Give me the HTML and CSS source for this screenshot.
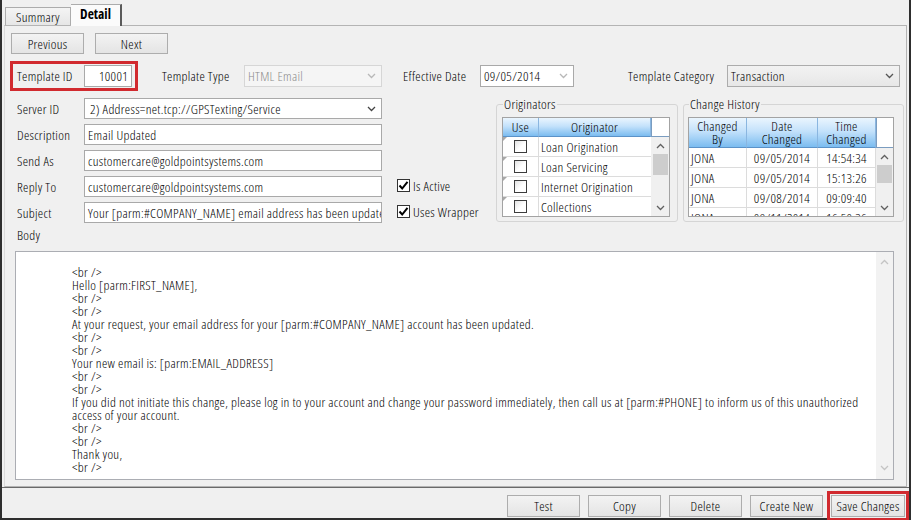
FILE: index.html
```html
<!DOCTYPE html>
<html>
<head>
<meta charset="utf-8">
<link rel="stylesheet" href="styles.css">
</head>
<body>
<div class="window">
  <div class="tabstrip">
    <div class="tab">Summary</div>
    <div class="tab active">Detail</div>
  </div>
  <div class="page">
    <div class="nav">
      <button class="btn">Previous</button>
      <button class="btn">Next</button>
    </div>
    <div class="row2">
      <div class="idbox">
        <span>Template ID</span>
        <div class="field idinput">10001</div>
      </div>
      <span class="lbl lbl-type">Template Type</span>
      <div class="field disabled w-type">HTML Email<svg class="chev" width="9" height="6" viewBox="0 0 9 6"><polyline points="1,1 4.5,4.5 8,1" fill="none" stroke="#b8b8b8" stroke-width="1.3"/></svg></div>
      <span class="lbl lbl-date">Effective Date</span>
      <div class="field w-date">09/05/2014<svg class="chev" width="9" height="6" viewBox="0 0 9 6"><polyline points="1,1 4.5,4.5 8,1" fill="none" stroke="#b8b8b8" stroke-width="1.3"/></svg></div>
      <span class="lbl lbl-cat">Template Category</span>
      <div class="field combo w-cat">Transaction<svg class="chev" width="9" height="6" viewBox="0 0 9 6"><polyline points="1,1 4.5,4.5 8,1" fill="none" stroke="#555" stroke-width="1.3"/></svg></div>
    </div>
    <div class="mid">
      <div class="form">
        <div class="frow"><span class="flbl">Server ID</span><div class="field wide srv">2) Address=net.tcp://GPSTexting/Service<svg class="chev" width="9" height="6" viewBox="0 0 9 6"><polyline points="1,1 4.5,4.5 8,1" fill="none" stroke="#444" stroke-width="1.3"/></svg></div></div>
        <div class="frow"><span class="flbl">Description</span><div class="field wide">Email Updated</div></div>
        <div class="frow"><span class="flbl">Send As</span><div class="field wide">customercare@goldpointsystems.com</div></div>
        <div class="frow"><span class="flbl">Reply To</span><div class="field wide">customercare@goldpointsystems.com</div></div>
        <div class="frow"><span class="flbl">Subject</span><div class="field wide">Your [parm:#COMPANY_NAME] email address has been updated</div></div>
      </div>
      <div class="checks">
        <div class="crow"></div>
        <div class="crow"></div>
        <div class="crow"></div>
        <div class="crow"><span class="cbox"><svg width="11" height="11" viewBox="0 0 11 11"><polyline points="1.5,5.5 4.2,8.5 9.5,1.8" fill="none" stroke="#000" stroke-width="2"/></svg></span><span>Is Active</span></div>
        <div class="crow"><span class="cbox"><svg width="11" height="11" viewBox="0 0 11 11"><polyline points="1.5,5.5 4.2,8.5 9.5,1.8" fill="none" stroke="#000" stroke-width="2"/></svg></span><span>Uses Wrapper</span></div>
      </div>
      <fieldset class="group g1">
        <legend>Originators</legend>
        <div class="grid og">
          <div class="ghead">
            <div class="hc h-use">Use</div>
            <div class="hc h-orig">Originator</div>
            <div class="corner"></div>
          </div>
          <div class="gbody">
            <div class="gcols">
              <div class="grow"><div class="c-use"><span class="gbox"></span></div><div class="c-orig">Loan Origination</div></div>
              <div class="grow"><div class="c-use"><span class="gbox"></span></div><div class="c-orig">Loan Servicing</div></div>
              <div class="grow"><div class="c-use"><span class="gbox"></span></div><div class="c-orig">Internet Origination</div></div>
              <div class="grow"><div class="c-use"><span class="gbox"></span></div><div class="c-orig">Collections</div></div>
            </div>
            <div class="vscroll s1">
              <div class="sarrow"><svg width="9" height="6" viewBox="0 0 9 6"><polyline points="1,5 4.5,1.5 8,5" fill="none" stroke="#606060" stroke-width="1.3"/></svg></div>
              <div class="thumb"></div>
              <div class="track"></div>
              <div class="sarrow"><svg width="9" height="6" viewBox="0 0 9 6"><polyline points="1,1 4.5,4.5 8,1" fill="none" stroke="#606060" stroke-width="1.3"/></svg></div>
            </div>
          </div>
        </div>
      </fieldset>
      <fieldset class="group g2">
        <legend>Change History</legend>
        <div class="grid hg">
          <div class="ghead tall">
            <div class="hc h-by">Changed<br>By</div>
            <div class="hc h-date">Date<br>Changed</div>
            <div class="hc h-time">Time<br>Changed</div>
            <div class="corner"></div>
          </div>
          <div class="gbody short">
            <div class="gcols hcols">
              <div class="grow"><div class="c-by">JONA</div><div class="c-date">09/05/2014</div><div class="c-time">14:54:34</div></div>
              <div class="grow"><div class="c-by">JONA</div><div class="c-date">09/05/2014</div><div class="c-time">15:13:26</div></div>
              <div class="grow"><div class="c-by">JONA</div><div class="c-date">09/08/2014</div><div class="c-time">09:09:40</div></div>
              <div class="grow"><div class="c-by">JONA</div><div class="c-date">09/11/2014</div><div class="c-time">16:50:36</div></div>
            </div>
            <div class="vscroll s2">
              <div class="sarrow"><svg width="9" height="6" viewBox="0 0 9 6"><polyline points="1,5 4.5,1.5 8,5" fill="none" stroke="#606060" stroke-width="1.3"/></svg></div>
              <div class="thumb"></div>
              <div class="track"></div>
              <div class="sarrow"><svg width="9" height="6" viewBox="0 0 9 6"><polyline points="1,1 4.5,4.5 8,1" fill="none" stroke="#606060" stroke-width="1.3"/></svg></div>
            </div>
          </div>
        </div>
      </fieldset>
    </div>
    <div class="bodylabel">Body</div>
    <div class="bodybox">
      <div class="bodytext">
        <div>&lt;br /&gt;</div>
        <div>Hello [parm:FIRST_NAME],</div>
        <div>&lt;br /&gt;</div>
        <div>&lt;br /&gt;</div>
        <div>At your request, your email address for your [parm:#COMPANY_NAME] account has been updated.</div>
        <div>&lt;br /&gt;</div>
        <div>&lt;br /&gt;</div>
        <div>Your new email is: [parm:EMAIL_ADDRESS]</div>
        <div>&lt;br /&gt;</div>
        <div>&lt;br /&gt;</div>
        <div>If you did not initiate this change, please log in to your account and change your password immediately, then call us at [parm:#PHONE] to inform us of this unauthorized</div>
        <div>access of your account.</div>
        <div>&lt;br /&gt;</div>
        <div>&lt;br /&gt;</div>
        <div>Thank you,</div>
        <div>&lt;br /&gt;</div>
      </div>
      <div class="bodyscroll">
        <svg width="9" height="6" viewBox="0 0 9 6"><polyline points="1,5 4.5,1.5 8,5" fill="none" stroke="#c4c4c4" stroke-width="1.3"/></svg>
        <svg width="9" height="6" viewBox="0 0 9 6"><polyline points="1,1 4.5,4.5 8,1" fill="none" stroke="#c4c4c4" stroke-width="1.3"/></svg>
      </div>
    </div>
  </div>
  <div class="footer">
    <button class="btn">Test</button>
    <button class="btn">Copy</button>
    <button class="btn">Delete</button>
    <button class="btn">Create New</button>
    <div class="savebox"><button class="btn save">Save Changes</button></div>
  </div>
</div>
</body>
</html>
```

FILE: styles.css
```css
* { box-sizing: border-box; }
html, body { margin: 0; padding: 0; }
body {
  width: 911px;
  height: 520px;
  overflow: hidden;
  background: #f0f0f0;
  font-family: "Open Sans", "Liberation Sans", Arial, sans-serif;
  font-stretch: 75%;
  font-weight: 300;
  font-size: 13.5px;
  letter-spacing: 0.3px;
  color: #000;
}
.window {
  width: 911px;
  height: 520px;
  border-left: 2px solid #2e2e2e;
  border-right: 2px solid #2e2e2e;
  border-bottom: 2px solid #2e2e2e;
  display: flex;
  flex-direction: column;
}

/* tabs */
.tabstrip {
  height: 25px;
  flex: none;
  display: flex;
  align-items: flex-end;
  padding-left: 3px;
  position: relative;
  z-index: 1;
}
.tab {
  height: 18px;
  width: 66px;
  border: 1px solid #acacac;
  border-bottom: none;
  background: linear-gradient(#f4f4f4, #e6e6e6);
  display: flex;
  align-items: center;
  justify-content: center;
}
.tab.active {
  height: 22px;
  width: 51px;
  margin-bottom: -1px;
  background: #fbfbfb;
  font-weight: bold;
  letter-spacing: 0;
  border-left: none;
  border-right: 2px solid #5a5a5a;
  padding-bottom: 3px;
}

.page {
  margin-left: 2px;
  width: 903px;
  height: 462px;
  flex: none;
  border: 1px solid #b4b4b4;
  border-left-color: #dadada;
  display: flex;
  flex-direction: column;
}

/* buttons */
.btn {
  width: 73px;
  height: 21px;
  border: 1px solid #adadad;
  background: linear-gradient(#f3f3f3, #e4e4e4);
  font: inherit;
  letter-spacing: inherit;
  color: #000;
  padding: 0;
  display: flex;
  align-items: center;
  justify-content: center;
  white-space: nowrap;
}
.nav {
  display: flex;
  gap: 11px;
  padding-left: 6px;
  margin-top: 7px;
}

/* fields */
.field {
  height: 22px;
  border: 1px solid #a9a9a9;
  background: #fff;
  display: flex;
  align-items: center;
  padding-left: 3px;
  white-space: nowrap;
  overflow: hidden;
}
.chev { margin-left: auto; margin-right: 5px; flex: none; }
.field.disabled {
  background: #f5f5f5;
  border-color: #d6d6d6;
  color: #8c8c8c;
}
.field.combo {
  background: linear-gradient(#f2f2f2, #e7e7e7);
  border-color: #acacac;
}

.row2 {
  display: flex;
  align-items: center;
  margin-top: 7px;
  margin-left: 5px;
  height: 30px;
}
.idbox {
  width: 128px;
  height: 30px;
  border: 3px solid #d12a2f;
  display: flex;
  align-items: center;
  justify-content: space-between;
  padding-left: 4px;
  padding-right: 3px;
}
.idinput {
  width: 48px;
  justify-content: flex-end;
  padding-right: 3px;
}
.lbl { white-space: nowrap; flex: none; }
.lbl-type { margin-left: 24px; width: 82px; }
.w-type { width: 138px; }
.lbl-date { margin-left: 21px; width: 77px; }
.w-date { width: 94px; }
.lbl-cat { margin-left: 54px; width: 99px; }
.w-cat { width: 173px; }

/* middle */
.mid {
  display: flex;
  margin-top: 6px;
  height: 125px;
}
.form {
  width: 377px;
  flex: none;
  padding-left: 12px;
  padding-top: 1px;
  display: flex;
  flex-direction: column;
  gap: 5px;
}
.frow {
  display: flex;
  align-items: center;
  height: 21px;
}
.flbl { width: 67px; flex: none; }
.field.wide { width: 298px; height: 21px; }
.field.srv { padding-left: 5px; }

.checks {
  width: 114px;
  flex: none;
  padding-top: 1px;
  padding-left: 15px;
  display: flex;
  flex-direction: column;
  gap: 5px;
}
.crow {
  height: 21px;
  display: flex;
  align-items: center;
  gap: 3px;
  white-space: nowrap;
}
.cbox {
  width: 13px;
  height: 13px;
  border: 1px solid #333;
  background: #fff;
  display: flex;
  align-items: center;
  justify-content: center;
}

/* group boxes */
.group {
  margin: 0;
  height: 125px;
  border: 1px solid #d5d5d5;
  border-radius: 3px;
  flex: none;
  min-width: 0;
}
.group legend {
  margin-left: 1px;
  padding: 0 1px;
  line-height: 14px;
}
.g1 { width: 182px; padding: 0 4px 4px 5px; }
.g2 { width: 221px; margin-left: 5px; padding: 0 4px 4px 4px; }

.grid {
  margin-top: 6px;
  border: 1px solid #a3a3a3;
  background: #fff;
}
.og { width: 168px; }
.hg { width: 206px; }
.ghead { display: flex; height: 19px; }
.ghead.tall { height: 30px; }
.hc {
  background: linear-gradient(#eaf5fe 0%, #c4e2fb 45%, #7bbcf0 100%);
  border-right: 1px solid #8ab6e0;
  border-bottom: 1px solid #5b92c8;
  display: flex;
  align-items: center;
  justify-content: center;
  text-align: center;
  line-height: 13px;
  flex: none;
}
.h-use { width: 36px; }
.h-orig { width: 112px; }
.corner {
  flex: 1;
  background: #fff;
  border: 1px solid #7a9cc0;
  border-top: none;
  border-right: none;
}
.h-by { width: 58px; }
.h-date { width: 71px; }
.h-time { width: 58px; }

.gbody { display: flex; height: 79px; overflow: hidden; }
.gbody.short { height: 68px; }
.gcols { width: 148px; flex: none; }
.hcols { width: 187px; }
.grow {
  display: flex;
  height: 20px;
  border-bottom: 1px solid #dcdcdc;
  align-items: stretch;
}
.c-use {
  width: 36px;
  border-right: 1px solid #dcdcdc;
  display: flex;
  align-items: center;
  justify-content: center;
  position: relative;
}
.c-use::before {
  content: "";
  position: absolute;
  left: 0;
  top: 0;
  border-top: 4px solid #a8a8a8;
  border-right: 4px solid transparent;
}
.gbox {
  width: 13px;
  height: 13px;
  border: 1px solid #3c3c3c;
  background: linear-gradient(135deg, #e2e2e2 0%, #fff 55%);
}
.c-orig {
  width: 112px;
  padding-left: 2px;
  display: flex;
  align-items: center;
  white-space: nowrap;
}
.c-by, .c-date, .c-time {
  display: flex;
  align-items: center;
  border-right: 1px solid #dcdcdc;
  white-space: nowrap;
}
.c-by { width: 58px; padding-left: 2px; }
.c-date { width: 71px; justify-content: center; }
.c-time { width: 58px; justify-content: center; }

.vscroll {
  flex: 1;
  background: #f0f0f0;
  display: flex;
  flex-direction: column;
  align-items: center;
}
.sarrow {
  height: 17px;
  flex: none;
  display: flex;
  align-items: center;
  justify-content: center;
}
.thumb {
  width: 15px;
  height: 21px;
  background: #cdcdcd;
  flex: none;
}
.s2 .thumb { height: 18px; }
.track { flex: 1; }

/* body */
.bodylabel {
  margin-top: 6px;
  padding-left: 12px;
  line-height: 14px;
}
.bodybox {
  margin-top: 9px;
  margin-left: 10px;
  width: 879px;
  height: 229px;
  border: 1px solid #abadb3;
  background: #fff;
  display: flex;
}
.bodytext {
  flex: 1;
  padding: 14px 0 0 56px;
  line-height: 13px;
  white-space: nowrap;
  overflow: hidden;
}
.bodyscroll {
  width: 17px;
  flex: none;
  background: #f2f2f2;
  display: flex;
  flex-direction: column;
  justify-content: space-between;
  align-items: center;
  padding: 7px 0 8px;
}

/* footer */
.footer {
  height: 31px;
  flex: none;
  border-top: 1px solid #6a6a6a;
  display: flex;
  justify-content: flex-end;
  align-items: flex-start;
  padding-top: 7px;
  gap: 8px;
}
.footer .btn { height: 22px; }
.savebox {
  margin-top: -4px;
  margin-left: -4px;
  border: 3px solid #d12a2f;
  padding: 1px;
}
.footer .btn.save { width: 74px; }
```
